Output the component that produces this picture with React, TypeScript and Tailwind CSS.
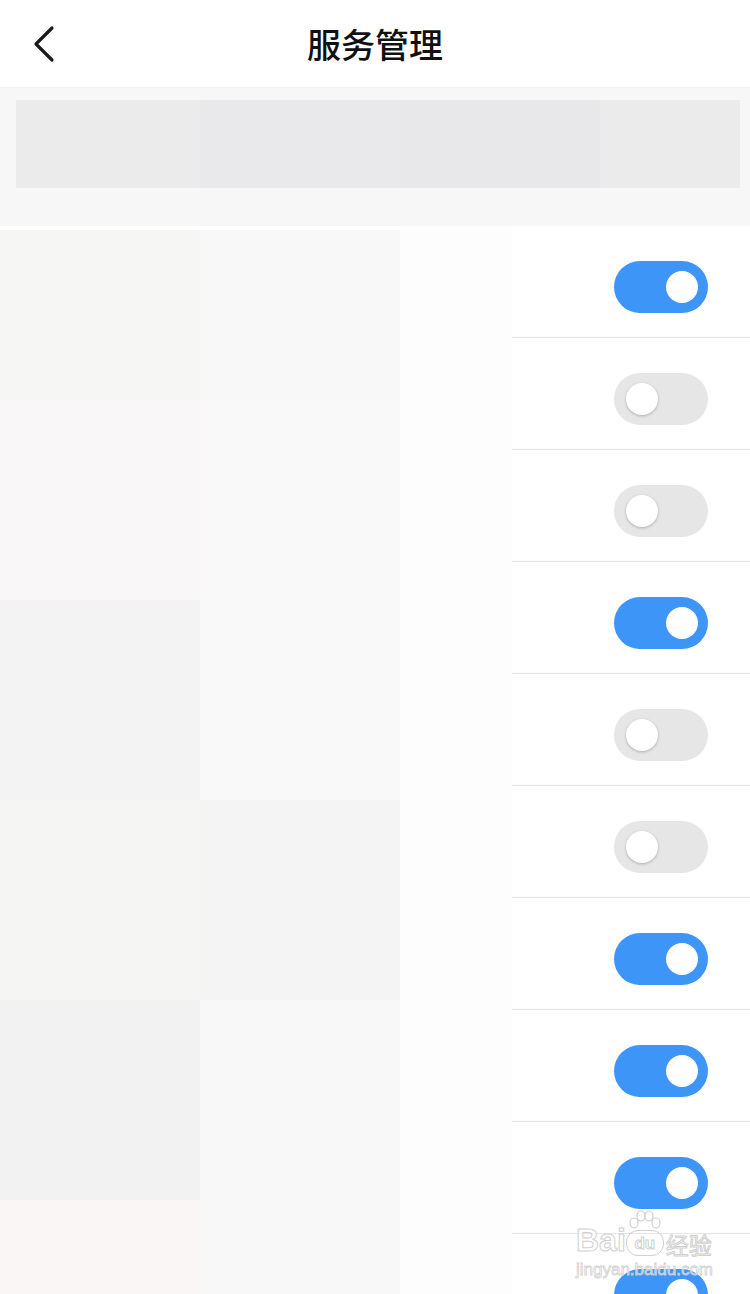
import React from "react";

const states = [true, false, false, true, false, false, true, true, true, true];

const mosaic: string[][] = [
  ["#f6f6f4", "#f8f8f8"],
  ["#faf7f8", "#f9f9f9"],
  ["#f3f3f3", "#f9f9f9"],
  ["#f5f5f3", "#f4f4f4"],
  ["#f2f2f2", "#f8f8f8"],
  ["#faf6f5", "#f8f8f8"],
];

function Toggle({ on }: { on: boolean }) {
  return on ? (
    <div className="w-[94px] h-[52px] rounded-full bg-[#3d96f7] flex items-center justify-end pr-[10px]">
      <div className="w-[32px] h-[32px] rounded-full bg-white" />
    </div>
  ) : (
    <div className="w-[94px] h-[52px] rounded-full bg-[#e6e6e6] flex items-center justify-start pl-[12px]">
      <div className="w-[32px] h-[32px] rounded-full bg-white shadow-[0_1px_3px_rgba(0,0,0,0.25)]" />
    </div>
  );
}

export default function App() {
  return (
    <div className="w-[750px] h-[1294px] overflow-hidden bg-white relative font-['Noto_Sans_CJK_SC',sans-serif]">
      {/* Header */}
      <div className="h-[88px] flex items-center relative border-b border-[#efefef]">
        <div className="pl-[33px] flex items-center">
          <svg width="24" height="38" viewBox="0 0 24 38" fill="none">
            <path d="M19 3 L3 19 L19 35" stroke="#1a1a1a" strokeWidth="3.2" strokeLinecap="round" strokeLinejoin="round" />
          </svg>
        </div>
        <div className="absolute inset-0 flex items-center justify-center pointer-events-none">
          <span className="text-[34px] font-medium text-[#111] leading-none">服务管理</span>
        </div>
      </div>

      {/* Banner section */}
      <div className="h-[138px] bg-[#f7f7f8] pt-[12px] pl-[16px] pr-[10px]">
        <div className="h-[88px] flex">
          <div className="w-[184px] bg-[#ebebeb]" />
          <div className="w-[200px] bg-[#e9e9eb]" />
          <div className="w-[200px] bg-[#e8e8ea]" />
          <div className="flex-1 bg-[#ebebeb]" />
        </div>
      </div>

      {/* List */}
      <div className="relative">
        {states.map((on, i) => (
          <div key={i} className="h-[112px] flex items-start justify-end pt-[35px] pr-[42px] relative">
            <Toggle on={on} />
            <div className="absolute left-[512px] right-0 bottom-0 h-px bg-[#e6e6e6]" />
          </div>
        ))}

        {/* privacy mosaic overlay */}
        <div className="absolute left-0 top-[4px] w-[400px] flex flex-col">
          {mosaic.map((row, r) => (
            <div key={r} className={r === 0 ? "flex h-[170px]" : "flex h-[200px]"}>
              <div className="w-[200px]" style={{ background: row[0] }} />
              <div className="w-[200px]" style={{ background: row[1] }} />
            </div>
          ))}
        </div>
        <div className="absolute left-[400px] top-[4px] w-[112px] h-[1100px] bg-[#fdfdfd]" />
      </div>

      {/* watermark */}
      <div className="absolute left-[576px] top-[1210px] flex flex-col items-start pointer-events-none">
        <div className="flex items-end">
          <span className="font-['Liberation_Sans',sans-serif] text-[32px] font-bold leading-none text-white/60 [-webkit-text-stroke:1px_#d0d0d0]">Bai</span>
          <div className="flex flex-col items-center">
            <svg width="36" height="20" viewBox="0 0 36 20" fill="none" stroke="#d0d0d0" strokeWidth="1.2">
              <ellipse cx="7" cy="13" rx="4" ry="5" />
              <ellipse cx="14" cy="6" rx="4" ry="5" />
              <ellipse cx="22" cy="6" rx="4" ry="5" />
              <ellipse cx="29" cy="13" rx="4" ry="5" />
            </svg>
            <span className="w-[38px] h-[26px] rounded-[12px] border border-[#d0d0d0] text-[17px] font-bold leading-none font-['Liberation_Sans',sans-serif] text-white/60 [-webkit-text-stroke:1px_#d0d0d0] flex items-center justify-center">du</span>
          </div>
          <span className="ml-[2px] text-[23px] leading-none text-white/60 [-webkit-text-stroke:1px_#d0d0d0]">经验</span>
        </div>
        <span className="mt-[5px] font-['Liberation_Sans',sans-serif] text-[17px] leading-none text-white/60 [-webkit-text-stroke:0.8px_#d0d0d0]">jingyan.baidu.com</span>
      </div>
    </div>
  );
}
